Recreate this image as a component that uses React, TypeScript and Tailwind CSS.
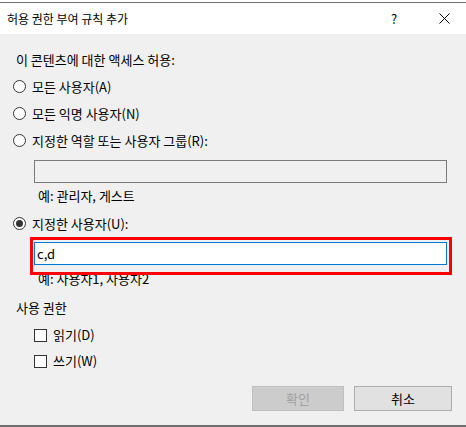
const font = { fontFamily: '"Noto Sans CJK KR", "Noto Sans", sans-serif' };

function Radio({ label, checked = false }: { label: string; checked?: boolean }) {
  return (
    <div className="flex h-[27px] items-center pl-[13px]">
      <span className="flex h-[13px] w-[13px] items-center justify-center rounded-full border border-[#333] bg-white">
        {checked && <span className="h-[7px] w-[7px] rounded-full bg-[#333]" />}
      </span>
      <span className="ml-[6px]">{label}</span>
    </div>
  );
}

function Check({ label }: { label: string }) {
  return (
    <div className="flex h-[26px] items-center pl-[34px]">
      <span className="h-[13px] w-[13px] border border-[#333] bg-white" />
      <span className="ml-[6px]">{label}</span>
    </div>
  );
}

export default function App() {
  return (
    <div
      className="flex h-[427px] w-[466px] flex-col overflow-hidden bg-[#f0f0f0] text-[13px] leading-[16px] text-black"
      style={font}
    >
      <div className="h-[3px] border-b border-[#707070] bg-white" />
      <div className="flex h-[31px] items-center bg-white pl-[7px] text-[12px]">
        <span className="flex-1">허용 권한 부여 규칙 추가</span>
        <span className="w-[10px] text-[13px]">?</span>
        <svg className="ml-[38px] mr-[16px]" width="11" height="11" viewBox="0 0 11 11">
          <path d="M0.5 0.5L10.5 10.5M10.5 0.5L0.5 10.5" stroke="#000" strokeWidth="1" />
        </svg>
      </div>

      <div className="relative flex flex-1 flex-col border-b-2 border-[#6e6e6e] pt-[12px]">
        <div className="flex h-[27px] items-center pl-[16px]">이 콘텐츠에 대한 액세스 허용:</div>
        <Radio label="모든 사용자(A)" />
        <Radio label="모든 익명 사용자(N)" />
        <Radio label="지정한 역할 또는 사용자 그룹(R):" />
        <div className="ml-[34px] mt-[6px] h-[23px] w-[413px] border border-[#7a7a7a] bg-[#f0f0f0]" />
        <div className="ml-[38px] mt-[5px]">예: 관리자, 게스트</div>
        <div className="mt-[6px]">
          <Radio label="지정한 사용자(U):" checked />
        </div>
        <div className="ml-[34px] mt-[5px] flex h-[23px] w-[413px] items-center border border-[#0078d7] bg-white pl-[2px]">
          c,d
        </div>
        <div className="ml-[38px] mt-[6px]">예: 사용자1, 사용자2</div>
        <div className="ml-[16px] mt-[13px]">사용 권한</div>
        <div className="mt-[6px]">
          <Check label="읽기(D)" />
          <Check label="쓰기(W)" />
        </div>
        <div className="mt-[12px] flex justify-end gap-[10px] pr-[14px]">
          <button className="flex h-[25px] w-[92px] items-center justify-center border border-[#bfbfbf] bg-[#cccccc] text-[#a0a0a0]">
            확인
          </button>
          <button className="flex h-[25px] w-[98px] items-center justify-center border border-[#adadad] bg-[#e1e1e1]">
            취소
          </button>
        </div>

        <div className="pointer-events-none absolute left-[30px] top-[203px] h-[38px] w-[422px] border-[3px] border-[#ff0000]" />
      </div>
    </div>
  );
}
